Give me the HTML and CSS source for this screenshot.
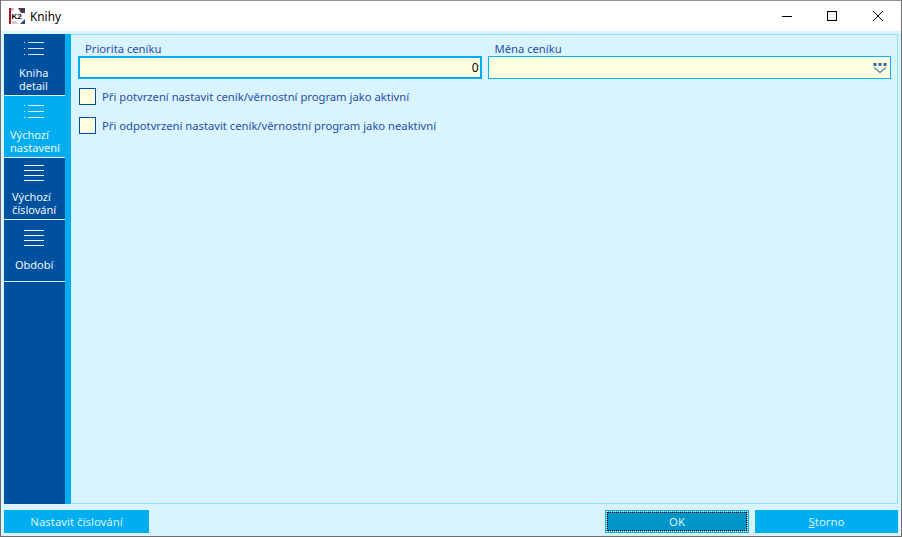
FILE: index.html
```
<!DOCTYPE html>
<html lang="cs">
<head>
<meta charset="utf-8">
<title>Knihy</title>
<link rel="stylesheet" href="styles.css">
</head>
<body>
<div class="window">
  <header class="titlebar">
    <svg class="logo" width="16" height="16" viewBox="0 0 16 16">
      <rect x="0" y="0" width="16" height="16" fill="#fff"/>
      <rect x="0" y="0" width="2" height="16" fill="#b01030"/>
      <path d="M9 0h7v5h-4z" fill="#4a3a48"/>
      <path d="M2 0h3l-1 3H2z" fill="#c8b0b8"/>
      <path d="M11 16l5-5v5z" fill="#2a4a78"/>
      <path d="M3 13h4l2 3H3z" fill="#d8c8d0"/>
      <text class="logo-text" x="2.500" y="11">K2</text>
    </svg>
    <span class="title">Knihy</span>
    <div class="controls">
      <svg width="16" height="16" viewBox="0 0 16 16"><path d="M3 8.500h10" stroke="#000" stroke-width="1"/></svg>
      <svg width="16" height="16" viewBox="0 0 16 16"><rect x="3.500" y="3.500" width="9" height="9" fill="none" stroke="#000"/></svg>
      <svg class="close" width="16" height="16" viewBox="0 0 16 16"><path d="M3 3l10 10M13 3L3 13" stroke="#000" fill="none"/></svg>
    </div>
  </header>
  <div class="client">
    <div class="main">
      <nav class="sidebar">
        <a class="tab">
          <span class="icon-wrap"><svg class="icon i1" width="20" height="13" viewBox="0 0 20 13"><path d="M0 .5h1M4 .5h16M0 6.500h1M4 6.500h16M0 12.500h1M4 12.500h16" stroke="#dbe8f5"/></svg></span>
          <span class="tab-label t1">Kniha<br>detail</span>
        </a>
        <a class="tab active">
          <span class="icon-wrap"><svg class="icon i2" width="20" height="13" viewBox="0 0 20 13"><path d="M0 .5h1M4 .5h16M0 6.500h1M4 6.500h16M0 12.500h1M4 12.500h16" stroke="#dff4fe"/></svg></span>
          <span class="tab-label t2">Výchozí<br>nastavení</span>
        </a>
        <a class="tab">
          <span class="icon-wrap"><svg class="icon i3" width="20" height="16" viewBox="0 0 20 16"><path d="M0 .5h20M0 5.500h20M0 10.500h20M0 15.500h20" stroke="#eef4fa"/></svg></span>
          <span class="tab-label t3">Výchozí<br>číslování</span>
        </a>
        <a class="tab">
          <span class="icon-wrap"><svg class="icon i4" width="20" height="16" viewBox="0 0 20 16"><path d="M0 .5h20M0 5.500h20M0 10.500h20M0 15.500h20" stroke="#eef4fa"/></svg></span>
          <span class="tab-label t4">Období</span>
        </a>
      </nav>
      <div class="strip"></div>
      <section class="panel">
        <div class="fields">
          <label class="field">
            <span class="field-label">Priorita ceníku</span>
            <span class="input focused">0</span>
          </label>
          <label class="field">
            <span class="field-label">Měna ceníku</span>
            <span class="input">
              <svg class="combo" width="14" height="10" viewBox="0 0 14 10">
                <path d="M0.500 0h3v3h-3zM5.500 0h3v3h-3zM10.500 0h3v3h-3z" fill="#2f6fa8"/>
                <path d="M1 4.500l6 5 6-5" fill="none" stroke="#3f86bd" stroke-width="1.200"/>
              </svg>
            </span>
          </label>
        </div>
        <div class="check"><span class="box"></span><span class="check-label">Při potvrzení nastavit ceník/věrnostní program jako aktivní</span></div>
        <div class="check"><span class="box"></span><span class="check-label">Při odpotvrzení nastavit ceník/věrnostní program jako neaktivní</span></div>
      </section>
    </div>
    <footer class="buttons">
      <button class="btn wide">Nastavit číslování</button>
      <span class="spacer"></span>
      <button class="btn default"><span class="btn-inner">OK</span></button>
      <button class="btn storno"><u>S</u>torno</button>
    </footer>
  </div>
</div>
</body>
</html>
```

FILE: styles.css
```
* { box-sizing: border-box; }
html, body { margin: 0; height: 100%; }
body { font-family: "Noto Sans", sans-serif; font-size: 11.220px; overflow: hidden; }
.window {
  width: 902px; height: 537px;
  display: flex; flex-direction: column;
  border: 1px solid #6e6e6e; border-top-color: #8c8c8c;
  background: #fff;
}
.titlebar {
  height: 30px; flex: none;
  display: flex; align-items: center;
  padding-left: 8px;
  background: #fff;
}
.logo { flex: none; }
.logo-text { font-family: "Liberation Sans", sans-serif; font-weight: 700; font-size: 8px; fill: #000; }
.title { margin-left: 5px; font-size: 11.800px; color: #000; }
.controls { margin-left: auto; display: flex; gap: 29px; margin-right: 15px; }
.close { margin-left: 1px; }
.client {
  flex: 1; min-height: 0;
  display: flex; flex-direction: column;
  background: #d9f3ff;
  padding: 3px;
}
.main { flex: 1; min-height: 0; display: flex; }
.sidebar { width: 61px; flex: none; background: #0050a0; display: flex; flex-direction: column; }
.tab {
  height: 62px; flex: none;
  display: flex; flex-direction: column;
  border-bottom: 1px solid #d9f3ff;
  color: #eef6fc;
}
.tab.active { background: #00aeef; }
.icon-wrap { height: 32px; flex: none; display: flex; padding-left: 20px; align-items: flex-start; }
.icon { flex: none; }
.i1 { margin-top: 8px; }
.i2 { margin-top: 9px; }
.i3 { margin-top: 7px; }
.i4 { margin-top: 10px; }
.tab-label { line-height: 13px; font-size: 11px; }
.t1 { padding-left: 15px; }
.t2 { padding-left: 6px; }
.t3 { padding-left: 8px; }
.t4 { padding-left: 11px; margin-top: 6px; }
.strip { width: 6px; flex: none; background: #00aeef; }
.panel {
  flex: 1; min-width: 0;
  border: 1px solid #96e0fa; border-left: none;
  padding: 7px 6px 0 7px;
}
.fields { display: flex; gap: 6px; margin-bottom: 9px; }
.field { flex: 1; display: flex; flex-direction: column; }
.field-label { color: #1f4fa8; padding-left: 7px; line-height: 14px; }
.input {
  height: 23px; display: flex; align-items: center; justify-content: flex-end;
  border: 1px solid #00b4f0; background: #ffffe0;
  padding-right: 3px; font-size: 12px; color: #000;
}
.input.focused { border-width: 2px; border-color: #00aeef; padding-right: 1px; }
.check { display: flex; align-items: center; height: 17px; margin: 0 0 12px 1px; }
.box { width: 17px; height: 17px; flex: none; border: 1px solid #0050a0; background: #ffffe0; }
.check-label { margin-left: 6px; color: #1f4fa8; }
.buttons { height: 29px; flex: none; display: flex; align-items: flex-end; gap: 6px; }
.btn {
  height: 23px; border: none; padding: 0;
  background: #00aeef; color: #d9f3ff;
  font-family: "Noto Sans", sans-serif; font-size: 11.400px;
}
.wide { width: 145px; }
.spacer { flex: 1; }
.default { width: 144px; padding: 2px; }
.btn-inner { display: flex; height: 100%; align-items: center; justify-content: center; background: #0095c8; outline: 1px dotted #fff; outline-offset: 0; border: 1px dotted #000; }
.storno { width: 143px; }
```
